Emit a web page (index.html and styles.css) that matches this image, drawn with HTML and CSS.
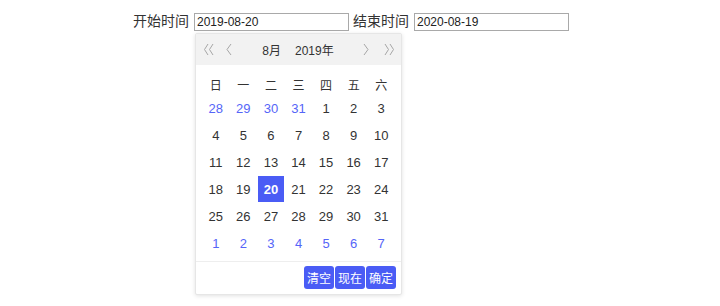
FILE: index.html
```html
<!DOCTYPE html>
<html>
<head>
<meta charset="utf-8">
<link rel="stylesheet" href="styles.css">
</head>
<body>
<div class="row">
  <label class="lbl">开始时间</label>
  <div class="field">
    <input class="inp" type="text" value="2019-08-20">
    <div class="picker">
      <div class="head">
        <span class="nav nav-dbl"><svg width="11" height="13" viewBox="0 0 11 13"><path d="M5 1 L1.5 6.5 L5 12 M10 1 L6.5 6.5 L10 12" fill="none" stroke="#a6a6a6" stroke-width="1"/></svg></span>
        <span class="nav"><svg width="7" height="13" viewBox="0 0 7 13"><path d="M6 1 L2 6.5 L6 12" fill="none" stroke="#a6a6a6" stroke-width="1"/></svg></span>
        <span class="title"><span class="month">8月</span><span class="year">2019年</span></span>
        <span class="nav"><svg width="7" height="13" viewBox="0 0 7 13"><path d="M1 1 L5 6.5 L1 12" fill="none" stroke="#a6a6a6" stroke-width="1"/></svg></span>
        <span class="nav nav-dbl"><svg width="11" height="13" viewBox="0 0 11 13"><path d="M1 1 L4.5 6.5 L1 12 M6 1 L9.5 6.5 L6 12" fill="none" stroke="#a6a6a6" stroke-width="1"/></svg></span>
      </div>
      <div class="grid">
        <span class="wk">日</span><span class="wk">一</span><span class="wk">二</span><span class="wk">三</span><span class="wk">四</span><span class="wk">五</span><span class="wk">六</span>
        <span class="d o">28</span><span class="d o">29</span><span class="d o">30</span><span class="d o">31</span><span class="d">1</span><span class="d">2</span><span class="d">3</span>
        <span class="d">4</span><span class="d">5</span><span class="d">6</span><span class="d">7</span><span class="d">8</span><span class="d">9</span><span class="d">10</span>
        <span class="d">11</span><span class="d">12</span><span class="d">13</span><span class="d">14</span><span class="d">15</span><span class="d">16</span><span class="d">17</span>
        <span class="d">18</span><span class="d">19</span><span class="d sel">20</span><span class="d">21</span><span class="d">22</span><span class="d">23</span><span class="d">24</span>
        <span class="d">25</span><span class="d">26</span><span class="d">27</span><span class="d">28</span><span class="d">29</span><span class="d">30</span><span class="d">31</span>
        <span class="d o">1</span><span class="d o">2</span><span class="d o">3</span><span class="d o">4</span><span class="d o">5</span><span class="d o">6</span><span class="d o">7</span>
      </div>
      <div class="foot">
        <span class="btn">清空</span><span class="btn">现在</span><span class="btn">确定</span>
      </div>
    </div>
  </div>
  <label class="lbl">结束时间</label>
  <div class="field">
    <input class="inp" type="text" value="2020-08-19">
  </div>
</div>
</body>
</html>
```
FILE: styles.css
```css
html, body { margin: 0; padding: 0; background: #fff; }
body {
  font-family: "Liberation Sans", "Noto Sans CJK SC", sans-serif;
  color: #333;
  width: 720px;
  height: 306px;
  overflow: hidden;
}
.row {
  display: flex;
  align-items: center;
  padding: 12px 0 0 133px;
  height: 18px;
}
.lbl {
  font-size: 14px;
  color: #333;
  margin-right: 5px;
  line-height: 18px;
}
.field { position: relative; margin-right: 4px; }
.inp {
  box-sizing: border-box;
  width: 155px;
  height: 18px;
  border: 1px solid #a9a9a9;
  padding: 0 2px;
  margin: 0;
  font-family: "Liberation Sans", "Noto Sans CJK SC", sans-serif;
  font-size: 12px;
  color: #222;
  outline: none;
}
.picker {
  position: absolute;
  left: 1px;
  top: 21px;
  box-sizing: border-box;
  width: 207px;
  height: 262px;
  background: #fff;
  border: 1px solid #e6e6e6;
  border-radius: 2px;
  box-shadow: 0 1px 4px rgba(0,0,0,0.12);
  display: flex;
  flex-direction: column;
  z-index: 2;
}
.head {
  height: 31px;
  background: #f2f2f2;
  display: flex;
  align-items: center;
  padding: 0 5px 0 5px;
}
.nav {
  display: flex;
  align-items: center;
  justify-content: center;
  width: 20px;
  height: 31px;
}
.nav-dbl { width: 14px; }
.head .nav:nth-child(2) { margin-left: 9px; width: 8px; }
.head .nav:nth-child(4) { margin-right: 12px; width: 8px; }
.title {
  flex: 1;
  display: flex;
  justify-content: center;
  font-size: 12px;
  color: #333;
  gap: 14px;
  padding-left: 2px;
}
.grid {
  display: grid;
  grid-template-columns: repeat(7, 1fr);
  grid-template-rows: 21px repeat(6, 27px);
  padding: 9px 6px 0;
}
.wk, .d {
  display: flex;
  align-items: center;
  justify-content: center;
  font-size: 13px;
  color: #333;
}
.wk { font-size: 12px; }
.d.o { color: #5565f8; }
.d.sel {
  background: #4a5cf5;
  color: #fff;
  font-weight: bold;
  width: 26px;
  height: 26px;
  justify-self: center;
  align-self: center;
}
.foot {
  margin-top: auto;
  border-top: 1px solid #eee;
  height: 32px;
  display: flex;
  justify-content: flex-end;
  align-items: center;
  padding-right: 5px;
  gap: 1px;
}
.btn {
  background: #4a5cf5;
  color: #fff;
  font-size: 12px;
  height: 23px;
  width: 30px;
  display: flex;
  align-items: center;
  justify-content: center;
  border-radius: 3px;
}
```
